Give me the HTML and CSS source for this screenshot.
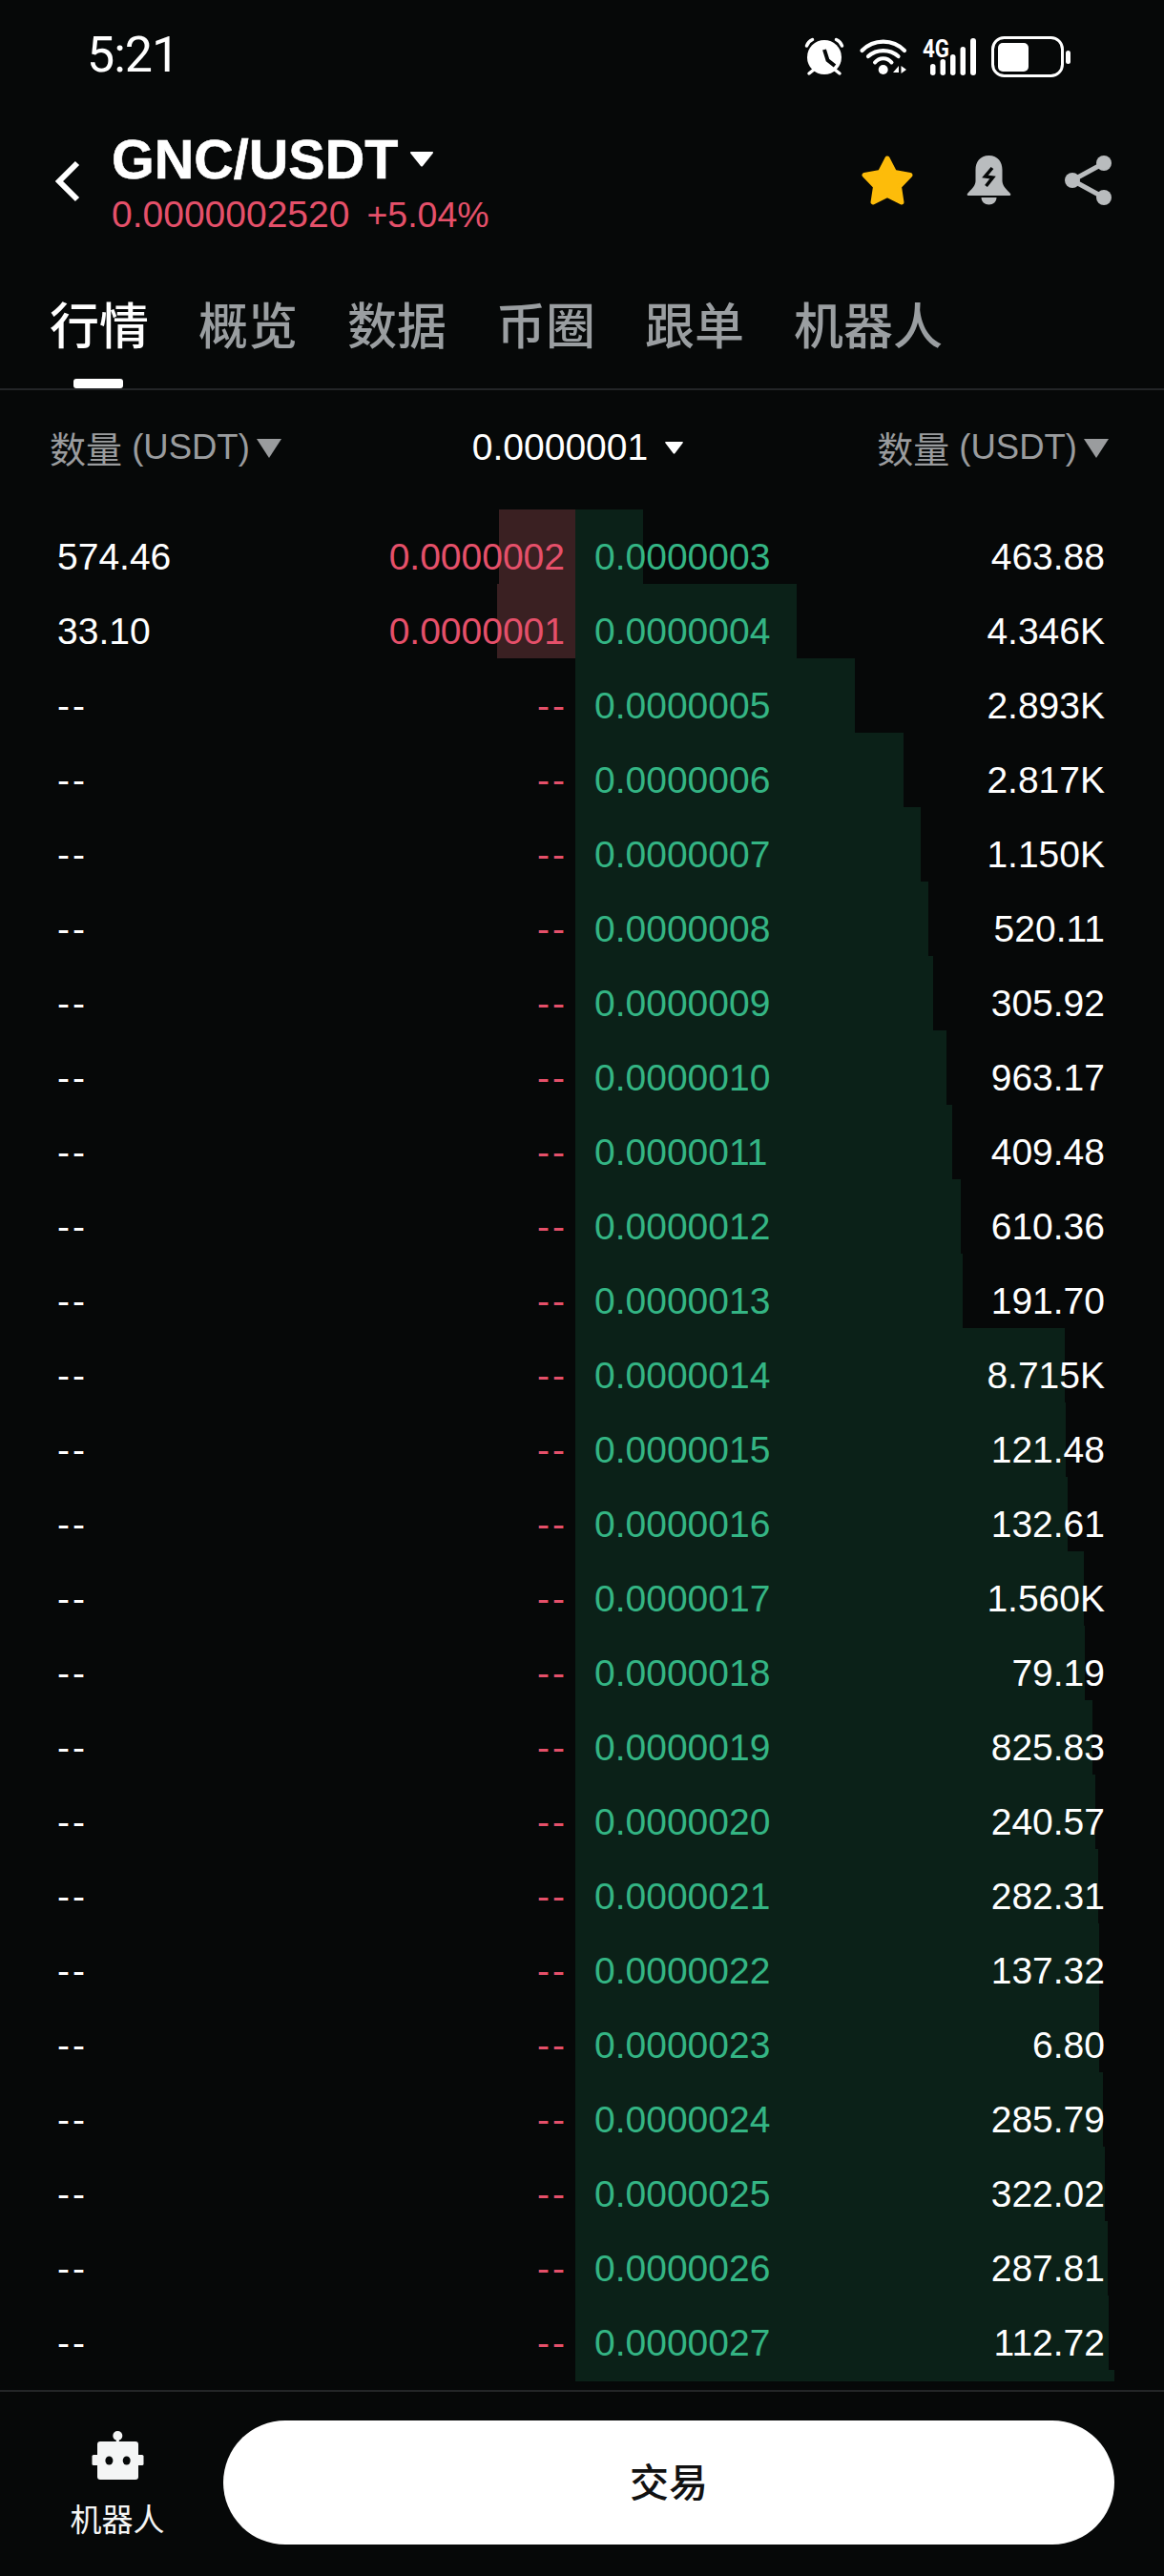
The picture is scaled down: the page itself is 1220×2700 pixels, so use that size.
FILE: index.html
```html
<!DOCTYPE html>
<html lang="zh">
<head>
<meta charset="utf-8">
<title>GNC/USDT</title>
<link rel="stylesheet" href="styles.css">
</head>
<body>
<div class="screen">
  <div class="status">
    <span class="time">5:21</span>
    <div class="sys">
      <svg class="ic-alarm" width="42" height="39" viewBox="0 0 42 39">
        <circle cx="20" cy="20" r="18" class="f-white"/>
        <path d="M20 12 L23.500 23 L31 29" class="s-bg" stroke-width="4" fill="none"/>
        <path d="M1.500 8 Q3 3.500 7.500 1.500 M32.500 1.500 Q37 3.500 38.500 8" class="s-white" stroke-width="3.500" fill="none" stroke-linecap="round"/>
        <path d="M4 37 L9 33 M36 37 L31 33" class="s-white" stroke-width="3.500" stroke-linecap="round"/>
      </svg>
      <svg class="ic-wifi" width="50" height="38" viewBox="0 0 50 38">
        <path d="M2.500 13 A31 31 0 0 1 47 13" class="s-white" stroke-width="4.200" fill="none" stroke-linecap="round"/>
        <path d="M9 19 A24 24 0 0 1 40.500 19" class="s-white" stroke-width="4.200" fill="none" stroke-linecap="round"/>
        <path d="M16 25.500 A11 11 0 0 1 33.500 25.500" class="s-white" stroke-width="4" fill="none" stroke-linecap="round"/>
        <circle cx="24.700" cy="33" r="5" class="f-white"/>
        <path d="M35 36 L41 29 L41 36 Z M43.500 29 L43.500 37 L49 33 Z" class="f-white"/>
      </svg>
      <svg class="ic-signal" width="58" height="40" viewBox="0 0 58 40">
        <text x="1" y="20" class="net" textLength="28" lengthAdjust="spacingAndGlyphs">4G</text>
        <rect x="9" y="27" width="5.500" height="12" rx="2.750" class="f-white"/>
        <rect x="19.500" y="22" width="5.500" height="17" rx="2.750" class="f-white"/>
        <rect x="30" y="17" width="5.500" height="22" rx="2.750" class="f-white"/>
        <rect x="40.500" y="9" width="5.500" height="30" rx="2.750" class="f-white"/>
        <rect x="51" y="0" width="6" height="39" rx="3" class="f-white"/>
      </svg>
      <svg class="ic-batt" width="84" height="43" viewBox="0 0 84 43">
        <rect x="1.500" y="1.500" width="73" height="40" rx="12" class="s-white" stroke-width="3" fill="none"/>
        <rect x="7" y="7" width="32" height="30" rx="5" class="f-white"/>
        <rect x="78" y="15" width="5" height="14" rx="2.500" class="f-white"/>
      </svg>
    </div>
  </div>

  <div class="topbar">
    <svg class="back" width="26" height="44" viewBox="0 0 26 44">
      <path d="M23 3 L4 22 L23 41" fill="none" class="s-white" stroke-width="6"/>
    </svg>
    <div class="pair">
      <div class="pair-name">GNC/USDT<svg class="caret-title" width="26" height="17" viewBox="0 0 24 16"><path d="M1.500 1 H22.500 Q24 1 23 2.500 L13 15 Q12 16 11 15 L1 2.500 Q0 1 1.500 1 Z" class="f-white"/></svg></div>
      <div class="pair-sub"><span>0.0000002520</span><span class="pct">+5.04%</span></div>
    </div>
    <div class="actions">
      <svg width="54" height="52" viewBox="0 0 54 52">
        <path d="M27 3 L34.500 17.500 L51 20.500 L39.500 32.500 L42 49 L27 41.500 L12 49 L14.500 32.500 L3 20.500 L19.500 17.500 Z" class="f-star s-star" stroke-width="5" stroke-linejoin="round"/>
      </svg>
      <svg width="47" height="52" viewBox="0 0 47 52">
        <path d="M23.500 0 C33 0 37.500 7 37.500 15 L37.500 27 C38 33 43 36 46 40 Q47 42 45 42 L2 42 Q0 42 1 40 C4 36 9 33 9.500 27 L9.500 15 C9.500 7 14 0 23.500 0 Z" class="f-grey"/>
        <path d="M15.500 44 H31.500 C31.500 48.500 28 51.500 23.500 51.500 C19 51.500 15.500 48.500 15.500 44 Z" class="f-grey"/>
        <path d="M27 13 L19.500 22 L27.500 23 L20.500 32" fill="none" class="s-bg" stroke-width="3.500"/>
      </svg>
      <svg width="50" height="52" viewBox="0 0 50 52">
        <path d="M41 8 L8 26 L41 44" fill="none" class="s-grey" stroke-width="5"/>
        <circle cx="41" cy="8" r="8" class="f-grey"/>
        <circle cx="8" cy="26" r="8" class="f-grey"/>
        <circle cx="41" cy="44" r="8" class="f-grey"/>
      </svg>
    </div>
  </div>

  <div class="tabs">
    <span class="tab active">行情</span>
    <span class="tab">概览</span>
    <span class="tab">数据</span>
    <span class="tab">币圈</span>
    <span class="tab">跟单</span>
    <span class="tab">机器人</span>
  </div>

  <div class="book-head">
    <div class="head-label"><span class="zh">数量</span> (USDT)<svg class="caret-grey" width="26" height="20" viewBox="0 0 26 20"><path d="M0 0 H26 L13 20 Z" class="f-dim"/></svg></div>
    <div class="head-step">0.0000001<svg class="caret-step" width="19" height="13" viewBox="0 0 19 13"><path d="M1 0 H18 Q19.500 0 18.500 1.500 L10.500 12 Q9.500 13.500 8.500 12 L0.500 1.500 Q-0.500 0 1 0 Z" class="f-white"/></svg></div>
    <div class="head-label"><span class="zh">数量</span> (USDT)<svg class="caret-grey" width="26" height="20" viewBox="0 0 26 20"><path d="M0 0 H26 L13 20 Z" class="f-dim"/></svg></div>
  </div>

  <div class="book">
    <div class="row"><div class="bid"><i class="bar-bid" style="width:80px"></i><span class="amt">574.46</span><span class="red">0.0000002</span></div><div class="ask"><i class="bar-ask" style="width:71px"></i><span class="green">0.0000003</span><span class="amt">463.88</span></div></div>
    <div class="row"><div class="bid"><i class="bar-bid" style="width:82px"></i><span class="amt">33.10</span><span class="red">0.0000001</span></div><div class="ask"><i class="bar-ask" style="width:232px"></i><span class="green">0.0000004</span><span class="amt">4.346K</span></div></div>
    <div class="row"><div class="bid"><span class="amt dash">--</span><span class="red dash">--</span></div><div class="ask"><i class="bar-ask" style="width:293px"></i><span class="green">0.0000005</span><span class="amt">2.893K</span></div></div>
    <div class="row"><div class="bid"><span class="amt dash">--</span><span class="red dash">--</span></div><div class="ask"><i class="bar-ask" style="width:344px"></i><span class="green">0.0000006</span><span class="amt">2.817K</span></div></div>
    <div class="row"><div class="bid"><span class="amt dash">--</span><span class="red dash">--</span></div><div class="ask"><i class="bar-ask" style="width:362px"></i><span class="green">0.0000007</span><span class="amt">1.150K</span></div></div>
    <div class="row"><div class="bid"><span class="amt dash">--</span><span class="red dash">--</span></div><div class="ask"><i class="bar-ask" style="width:370px"></i><span class="green">0.0000008</span><span class="amt">520.11</span></div></div>
    <div class="row"><div class="bid"><span class="amt dash">--</span><span class="red dash">--</span></div><div class="ask"><i class="bar-ask" style="width:375px"></i><span class="green">0.0000009</span><span class="amt">305.92</span></div></div>
    <div class="row"><div class="bid"><span class="amt dash">--</span><span class="red dash">--</span></div><div class="ask"><i class="bar-ask" style="width:389px"></i><span class="green">0.0000010</span><span class="amt">963.17</span></div></div>
    <div class="row"><div class="bid"><span class="amt dash">--</span><span class="red dash">--</span></div><div class="ask"><i class="bar-ask" style="width:395px"></i><span class="green">0.0000011</span><span class="amt">409.48</span></div></div>
    <div class="row"><div class="bid"><span class="amt dash">--</span><span class="red dash">--</span></div><div class="ask"><i class="bar-ask" style="width:404px"></i><span class="green">0.0000012</span><span class="amt">610.36</span></div></div>
    <div class="row"><div class="bid"><span class="amt dash">--</span><span class="red dash">--</span></div><div class="ask"><i class="bar-ask" style="width:406px"></i><span class="green">0.0000013</span><span class="amt">191.70</span></div></div>
    <div class="row"><div class="bid"><span class="amt dash">--</span><span class="red dash">--</span></div><div class="ask"><i class="bar-ask" style="width:513px"></i><span class="green">0.0000014</span><span class="amt">8.715K</span></div></div>
    <div class="row"><div class="bid"><span class="amt dash">--</span><span class="red dash">--</span></div><div class="ask"><i class="bar-ask" style="width:514px"></i><span class="green">0.0000015</span><span class="amt">121.48</span></div></div>
    <div class="row"><div class="bid"><span class="amt dash">--</span><span class="red dash">--</span></div><div class="ask"><i class="bar-ask" style="width:516px"></i><span class="green">0.0000016</span><span class="amt">132.61</span></div></div>
    <div class="row"><div class="bid"><span class="amt dash">--</span><span class="red dash">--</span></div><div class="ask"><i class="bar-ask" style="width:533px"></i><span class="green">0.0000017</span><span class="amt">1.560K</span></div></div>
    <div class="row"><div class="bid"><span class="amt dash">--</span><span class="red dash">--</span></div><div class="ask"><i class="bar-ask" style="width:534px"></i><span class="green">0.0000018</span><span class="amt">79.19</span></div></div>
    <div class="row"><div class="bid"><span class="amt dash">--</span><span class="red dash">--</span></div><div class="ask"><i class="bar-ask" style="width:542px"></i><span class="green">0.0000019</span><span class="amt">825.83</span></div></div>
    <div class="row"><div class="bid"><span class="amt dash">--</span><span class="red dash">--</span></div><div class="ask"><i class="bar-ask" style="width:545px"></i><span class="green">0.0000020</span><span class="amt">240.57</span></div></div>
    <div class="row"><div class="bid"><span class="amt dash">--</span><span class="red dash">--</span></div><div class="ask"><i class="bar-ask" style="width:548px"></i><span class="green">0.0000021</span><span class="amt">282.31</span></div></div>
    <div class="row"><div class="bid"><span class="amt dash">--</span><span class="red dash">--</span></div><div class="ask"><i class="bar-ask" style="width:549px"></i><span class="green">0.0000022</span><span class="amt">137.32</span></div></div>
    <div class="row"><div class="bid"><span class="amt dash">--</span><span class="red dash">--</span></div><div class="ask"><i class="bar-ask" style="width:549px"></i><span class="green">0.0000023</span><span class="amt">6.80</span></div></div>
    <div class="row"><div class="bid"><span class="amt dash">--</span><span class="red dash">--</span></div><div class="ask"><i class="bar-ask" style="width:553px"></i><span class="green">0.0000024</span><span class="amt">285.79</span></div></div>
    <div class="row"><div class="bid"><span class="amt dash">--</span><span class="red dash">--</span></div><div class="ask"><i class="bar-ask" style="width:555px"></i><span class="green">0.0000025</span><span class="amt">322.02</span></div></div>
    <div class="row"><div class="bid"><span class="amt dash">--</span><span class="red dash">--</span></div><div class="ask"><i class="bar-ask" style="width:558px"></i><span class="green">0.0000026</span><span class="amt">287.81</span></div></div>
    <div class="row"><div class="bid"><span class="amt dash">--</span><span class="red dash">--</span></div><div class="ask"><i class="bar-ask" style="width:559px"></i><span class="green">0.0000027</span><span class="amt">112.72</span></div></div>
    <div class="row"><div class="bid"></div><div class="ask"><i class="bar-ask" style="width:565px"></i></div></div>
  </div>

  <div class="footer">
    <div class="bot">
      <svg width="55" height="51" viewBox="0 0 55 51">
        <circle cx="27.300" cy="5" r="5" class="f-soft"/>
        <rect x="25.800" y="6" width="3" height="7" class="f-soft"/>
        <rect x="6" y="11" width="43" height="40" rx="3" class="f-soft"/>
        <rect x="0.500" y="25" width="54" height="11" rx="1.500" class="f-soft"/>
        <ellipse cx="18.400" cy="31" rx="4" ry="4.500" class="f-bg"/>
        <ellipse cx="36.700" cy="31" rx="4" ry="4.500" class="f-bg"/>
      </svg>
      <span class="bot-label">机器人</span>
    </div>
    <div class="trade">交易</div>
  </div>
</div>
</body>
</html>
```
FILE: styles.css
```css
* { box-sizing: border-box; }
html, body { margin: 0; padding: 0; background: #060808; }
body { font-family: "Liberation Sans", "Noto Sans CJK SC", sans-serif; color: #fff; }
.screen { width: 1220px; height: 2700px; overflow: hidden; background: #060808; }

.f-white { fill: #fff; }
.f-soft { fill: #f4f5f5; }
.f-grey { fill: #b9bcbe; }
.f-dim { fill: #9a9c9e; }
.f-bg { fill: #060808; }
.f-star { fill: #fdbc0a; }
.s-star { stroke: #fdbc0a; }
.s-white { stroke: #fff; }
.s-grey { stroke: #b9bcbe; }
.s-bg { stroke: #060808; }

/* status bar */
.status { height: 120px; display: flex; justify-content: space-between; padding: 0 97px 0 91px; }
.time { font-family: "Roboto", sans-serif; font-size: 52px; line-height: 60px; padding-top: 28px; letter-spacing: -1px; }
.sys { display: flex; align-items: flex-start; padding-top: 38px; }
.sys svg { overflow: visible; }
.ic-alarm { margin: 2px 15px 0 0; }
.ic-wifi { margin: 2px 15px 0 0; }
.ic-signal { margin: 2px 15px 0 0; }
.net { font-family: "Roboto", sans-serif; font-weight: 700; font-size: 26px; fill: #fff; }

/* top bar */
.topbar { height: 160px; display: flex; align-items: flex-start; padding: 0 54px 0 58px; }
.back { margin-top: 48px; }
.pair { margin: 17px 0 0 33px; }
.pair-name { font-size: 57.5px; font-weight: 700; line-height: 60px; display: flex; align-items: flex-start; -webkit-text-stroke: 0.6px #fff; }
.caret-title { margin: 21px 0 0 12px; }
.pair-sub { font-size: 39px; line-height: 46px; margin-top: 5px; color: #e5506a; display: flex; gap: 18px; }
.pct { font-size: 37.5px; }
.actions { margin: 43px 0 0 auto; display: flex; gap: 56px; align-items: flex-start; }

/* tabs */
.tabs { height: 129px; padding: 29px 0 0 52px; display: flex; gap: 52px; border-bottom: 2px solid #232527; }
.tab { position: relative; font-family: "Noto Sans CJK SC", sans-serif; font-size: 52px; line-height: 60px; font-weight: 500; color: #9a9ea1; height: 60px; }
.tab.active { color: #fff; }
.tab.active::after { content: ""; position: absolute; left: 25px; top: 88px; width: 52px; height: 10px; border-radius: 3px; background: #fff; }

/* book header */
.book-head { height: 125px; padding: 38px 58px 0 52px; display: flex; justify-content: space-between; align-items: flex-start; }
.head-label { font-size: 36.5px; line-height: 44px; color: #9a9c9e; display: flex; align-items: flex-start; white-space: pre; }
.head-label .zh { font-family: "Noto Sans CJK SC", sans-serif; font-size: 38px; }
.caret-grey { margin: 13px 0 0 7px; }
.head-step { font-size: 39px; line-height: 44px; display: flex; align-items: flex-start; color: #fff; margin-right: 3px; }
.caret-step { margin: 16px 0 0 18px; }

/* order book */
.book { height: 1962px; overflow: hidden; }
.row { height: 78px; display: grid; grid-template-columns: 603px 1fr; font-size: 39px; line-height: 44px; }
.bid, .ask { position: relative; display: flex; justify-content: space-between; padding-top: 28px; white-space: nowrap; }
.bid { padding-left: 60px; padding-right: 11px; }
.ask { padding-left: 20px; padding-right: 62px; }
.bid span, .ask span { position: relative; }
.bar-bid, .bar-ask { position: absolute; top: 0; bottom: 0; }
.bar-bid { right: 0; background: #3a2022; }
.bar-ask { left: 0; background: #0b2118; }
.amt { color: #fff; }
.red { color: #e5506a; }
.green { color: #34b584; }
.dash { letter-spacing: 3px; }
.red.dash { margin-right: -3px; }

/* footer */
.footer { margin-top: 9px; height: 195px; border-top: 2px solid #232527; padding: 30px 52px 0 72px; display: flex; align-items: flex-start; }
.bot { width: 102px; margin-top: 11px; display: flex; flex-direction: column; align-items: center; flex: none; }
.bot-label { font-family: "Noto Sans CJK SC", sans-serif; font-size: 33px; line-height: 38px; margin-top: 21px; color: #f4f5f5; }
.trade { margin-left: 60px; flex: 1; height: 130px; padding-bottom: 6px; border-radius: 65px; background: #fff; color: #111; font-family: "Noto Sans CJK SC", sans-serif; font-size: 41px; font-weight: 500; display: flex; align-items: center; justify-content: center; }
```
